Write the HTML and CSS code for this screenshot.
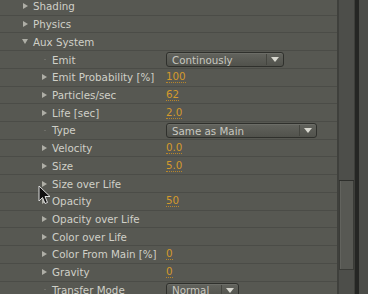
FILE: index.html
```html
<!DOCTYPE html>
<html lang="en">
<head>
    <meta charset="UTF-8">
    <title>Effect Controls</title>
    <link rel="stylesheet" href="styles.css">
</head>
<body>
    <div class="window">
        <div class="panel">
            <div class="rows">
                <div class="row lvl0"><span class="tri right"></span><span class="label">Shading</span></div>
                <div class="row lvl0"><span class="tri right"></span><span class="label">Physics</span></div>
                <div class="row lvl0"><span class="tri down"></span><span class="label">Aux System</span></div>
                <div class="row lvl1"><span class="dot"></span><span class="label">Emit</span>
                    <div class="select wide"><span class="sel-text">Continously</span><span class="sel-btn"></span></div></div>
                <div class="row lvl1"><span class="tri right"></span><span class="label">Emit Probability [%]</span><span class="value">100</span></div>
                <div class="row lvl1"><span class="tri right"></span><span class="label">Particles/sec</span><span class="value">62</span></div>
                <div class="row lvl1"><span class="tri right"></span><span class="label">Life [sec]</span><span class="value">2.0</span></div>
                <div class="row lvl1"><span class="dot"></span><span class="label">Type</span>
                    <div class="select wider"><span class="sel-text">Same as Main</span><span class="sel-btn"></span></div></div>
                <div class="row lvl1"><span class="tri right"></span><span class="label">Velocity</span><span class="value">0.0</span></div>
                <div class="row lvl1"><span class="tri right"></span><span class="label">Size</span><span class="value">5.0</span></div>
                <div class="row lvl1"><span class="tri right"></span><span class="label">Size over Life</span></div>
                <div class="row lvl1"><span class="tri right"></span><span class="label">Opacity</span><span class="value">50</span></div>
                <div class="row lvl1"><span class="tri right"></span><span class="label">Opacity over Life</span></div>
                <div class="row lvl1"><span class="tri right"></span><span class="label">Color over Life</span></div>
                <div class="row lvl1"><span class="tri right"></span><span class="label">Color From Main [%]</span><span class="value">0</span></div>
                <div class="row lvl1"><span class="tri right"></span><span class="label">Gravity</span><span class="value">0</span></div>
                <div class="row lvl1"><span class="dot"></span><span class="label">Transfer Mode</span>
                    <div class="select narrow"><span class="sel-text">Normal</span><span class="sel-btn"></span></div></div>
            </div>
            <svg class="cursor" width="13" height="20" viewBox="0 0 13 20">
                <path d="M1 1 L1 16 L4.5 12.5 L7 18.5 L9.5 17.5 L7 11.5 L12 11.5 Z" fill="#111" stroke="#ddd" stroke-width="1"/>
            </svg>
        </div>
        <div class="scrollbar">
            <div class="track top"></div>
            <div class="thumb"></div>
            <div class="track"></div>
        </div>
        <div class="edge"></div>
        <div class="side"></div>
    </div>
</body>
</html>
```

FILE: styles.css
```css
html, body {
    margin: 0;
    padding: 0;
    background-color: #575852;
}
body {
    width: 368px;
    height: 294px;
    overflow: hidden;
    font-family: "DejaVu Sans", Verdana, sans-serif;
    font-size: 10.3px;
    color: #d0d0c8;
}
.window {
    display: flex;
    height: 294px;
}
.panel {
    position: relative;
    width: 337px;
    height: 294px;
    overflow: hidden;
    background-color: #575852;
}
.rows {
    margin-top: -2px;
}
.row {
    position: relative;
    display: flex;
    align-items: center;
    height: 16.73px;
    border-bottom: 1px solid #4b4c47;
}
.lvl0 {
    padding-left: 23px;
}
.lvl1 {
    padding-left: 42px;
}
.tri {
    width: 0;
    height: 0;
    margin-right: 5px;
}
.tri.right {
    border-top: 3.5px solid transparent;
    border-bottom: 3.5px solid transparent;
    border-left: 5px solid #aeaea6;
}
.tri.down {
    border-left: 3.5px solid transparent;
    border-right: 3.5px solid transparent;
    border-top: 5px solid #aeaea6;
    margin-left: -1px;
}
.dot {
    width: 2px;
    height: 1px;
    background-color: #6e6e68;
    margin-left: 2px;
    margin-right: 6px;
}
.label {
    white-space: nowrap;
}
.value {
    position: absolute;
    left: 166px;
    color: #d49a2c;
    border-bottom: 1px dotted #b8862a;
    line-height: 11px;
}
.select {
    position: absolute;
    left: 166px;
    top: 1px;
    height: 13px;
    display: flex;
    align-items: center;
    border: 1px solid #2f302c;
    border-radius: 3px;
    background: linear-gradient(#62635d, #51524c);
    box-shadow: inset 0 1px 0 #6c6d67;
    color: #c8c8c0;
}
.select.wide {
    width: 116px;
}
.select.wider {
    width: 149px;
}
.select.narrow {
    width: 71px;
}
.sel-text {
    flex: 1;
    padding-left: 5px;
    white-space: nowrap;
    overflow: hidden;
}
.sel-btn {
    position: relative;
    width: 16px;
    height: 11px;
    border-left: 1px solid #44453f;
}
.sel-btn::after {
    content: "";
    position: absolute;
    left: 4px;
    top: 3px;
    border-left: 4px solid transparent;
    border-right: 4px solid transparent;
    border-top: 5px solid #d8d8d0;
}
.cursor {
    position: absolute;
    left: 38px;
    top: 185px;
}
.scrollbar {
    display: flex;
    flex-direction: column;
    width: 15px;
    border-left: 2px solid #3f403c;
    background-color: #4d4e4a;
}
.track {
    flex: 1;
    background-color: #4d4e4a;
}
.track.top {
    flex: none;
    height: 180px;
    border-bottom: 1px solid #2e2f2c;
}
.thumb {
    height: 88px;
    background-color: #575853;
    border: 1px solid #3a3b37;
    border-top: none;
    box-shadow: inset 1px 0 0 #62635e;
}
.edge {
    width: 5px;
    background: linear-gradient(90deg, #3e3f3b 0, #3e3f3b 1px, #252624 1px);
}
.side {
    flex: 1;
    background-color: #4b4c48;
}
```
